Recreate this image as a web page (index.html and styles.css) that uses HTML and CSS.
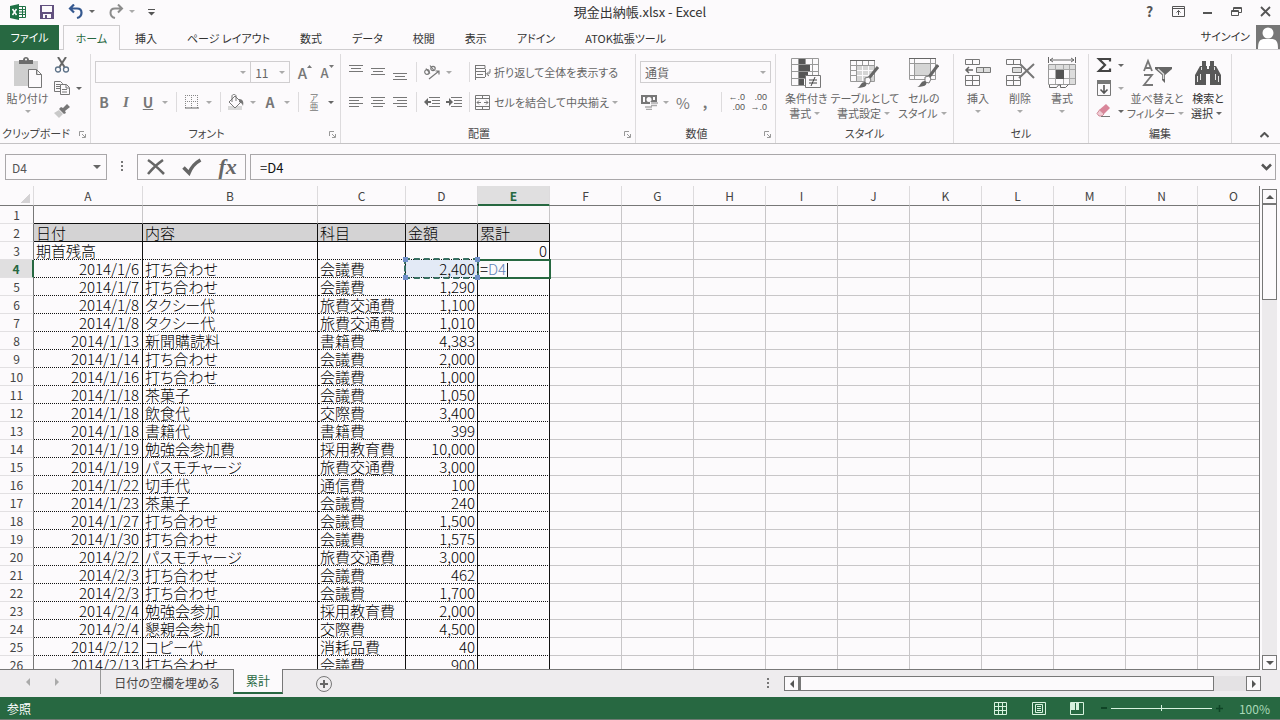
FILE: index.html
```html
<!DOCTYPE html>
<html lang="ja">
<head>
<meta charset="utf-8">
<title>現金出納帳.xlsx - Excel</title>
<link rel="stylesheet" href="styles.css">
</head>
<body>
<header class="titlebar">
  <div class="quick">
    <svg class="ic" width="18" height="18" viewBox="0 0 18 18"><path fill="#1f7145" d="M1 3l9-2v16l-9-2z"/><path fill="none" stroke="#1f7145" d="M10 3.500h6.500v11H10M10 6.500h6M10 9h6M10 11.500h6M13.500 4v10"/><path stroke="#fff" stroke-width="1.500" d="M3.500 6l4 6M7.500 6l-4 6"/></svg>
    <button class="qb" aria-label="上書き保存"><svg width="16" height="16" viewBox="0 0 16 16"><path fill="#62517f" d="M1 1h14v14H1zM3 2v6h10V2zM4 10v4h2v-3h2v3h4v-4z" fill-rule="evenodd"/></svg></button>
    <button class="qb" aria-label="元に戻す"><svg width="16" height="16" viewBox="0 0 16 16"><path fill="none" stroke="#35588f" stroke-width="2.200" d="M6 .5L2 4.500l4 4M2.500 4.500H9c6 0 6 8 0 9.500"/></svg></button>
    <span class="dd dark"></span>
    <button class="qb redo" aria-label="やり直し"><svg width="16" height="16" viewBox="0 0 16 16"><path fill="none" stroke="#8c8c8c" stroke-width="2" d="M10 .5l4 4-4 4M13.500 4.500H7c-6 0-6 8 0 9.500"/></svg></button>
    <span class="dd"></span>
    <button class="qb more" aria-label="カスタマイズ"><svg width="7" height="8" viewBox="0 0 7 8"><path fill="#555" d="M0 1h7v1H0zM0 4h7L3.500 7.500z"/></svg></button>
  </div>
  <div class="doc">現金出納帳.xlsx - Excel</div>
  <div class="win">
    <button aria-label="ヘルプ" class="help">?</button>
    <button aria-label="リボンの表示"><svg width="13" height="11" viewBox="0 0 13 11"><path fill="none" stroke="#555" d="M.5.5h12v10H.5zM.5 2.500h12M6.500 9V4.500M4.500 6.500l2-2 2 2"/></svg></button>
    <button aria-label="最小化"><svg width="11" height="11" viewBox="0 0 11 11"><path stroke="#555" stroke-width="2" d="M1 7h9"/></svg></button>
    <button aria-label="元のサイズ"><svg width="11" height="11" viewBox="0 0 11 11"><path fill="none" stroke="#555" d="M.5 4.500h7v5h-7zM.5 5.500h7M2.500 4V1.500h8v5H8M2.500 2.500h8"/></svg></button>
    <button aria-label="閉じる"><svg width="11" height="11" viewBox="0 0 11 11"><path stroke="#555" stroke-width="1.800" d="M1 1l9 9M10 1l-9 9"/></svg></button>
  </div>
</header>

<nav class="tabs">
  <button class="file">ファイル</button>
  <button class="tab on">ホーム</button>
  <button class="tab">挿入</button>
  <button class="tab">ページ レイアウト</button>
  <button class="tab">数式</button>
  <button class="tab">データ</button>
  <button class="tab">校閲</button>
  <button class="tab">表示</button>
  <button class="tab">アドイン</button>
  <button class="tab">ATOK拡張ツール</button>
  <a class="signin" href="#">サインイン</a>
  <svg class="avatar" width="24" height="24" viewBox="0 0 24 24"><path fill="#777" d="M0 0h24v24H0z"/><circle cx="12" cy="8" r="5.500" fill="#fff"/><path fill="#fff" d="M2 24c0-8 2-10 7-10h6c5 0 7 2 7 10z"/></svg>
</nav>

<section class="ribbon">
  <div class="group g-clip">
    <div class="body">
      <button class="big dim"><svg width="30" height="32" viewBox="0 0 30 32"><path fill="#cfcfcf" d="M1 4h24v25H1z"/><path fill="#6c6c6c" d="M6 3h4c0-4 6-4 6 0h4v4H6z"/><circle cx="13" cy="2.500" r="1" fill="#fff"/><path fill="#fcfafc" stroke="#777" d="M15.500 12.500h8l5 5v13h-13zM23.500 12.500v5h5"/></svg><span>貼り付け</span><i class="dd"></i></button>
      <div class="stack">
        <div class="row"><button class="t" aria-label="切り取り"><svg width="16" height="16" viewBox="0 0 16 16"><path stroke="#666" stroke-width="2" d="M4 0l6.500 10M12 0L5.500 10"/><circle cx="4" cy="12.500" r="2.500" fill="none" stroke="#5d7288" stroke-width="1.300"/><circle cx="12" cy="12.500" r="2.500" fill="none" stroke="#5d7288" stroke-width="1.300"/></svg></button></div>
        <div class="row"><button class="t" aria-label="コピー"><svg width="16" height="14" viewBox="0 0 16 14"><path fill="#fcfafc" stroke="#777" d="M.5.5h6l2 2v8h-8zM2 3.500h4M2 5.500h4M2 7.500h4"/><path fill="#fcfafc" stroke="#777" d="M6.500 3.500h6l3 3v7h-9zM12 3.500v3.500h3M8 8.500h5M8 11h5"/></svg></button><i class="dd dark"></i></div>
        <div class="row"><button class="t" aria-label="書式のコピー"><svg width="16" height="14" viewBox="0 0 16 14"><path fill="#777" d="M13 0l3 3-5 4 1 2-2 1-5-5 2-2 2 1z"/><path fill="#c9c9c9" d="M5 6l4 4-4 4-5-5z"/></svg></button></div>
      </div>
    </div>
    <div class="cap launched">クリップボード<svg class="launch" viewBox="0 0 7 7"><path d="M.5 5V.5H5M3 3l3 3M6.500 3v3.500H3"/></svg></div>
  </div>

  <div class="group g-font">
    <div class="body lines">
      <div class="row boxes">
        <select class="sel name" aria-label="フォント"><option></option></select>
        <select class="sel size" aria-label="フォント サイズ"><option>11</option></select>
        <button class="t letter" aria-label="拡大">A<svg width="5" height="3" viewBox="0 0 5 3"><path fill="#777" d="M0 3h5L2.500 0z"/></svg></button><button class="t letter small" aria-label="縮小">A<svg width="5" height="3" viewBox="0 0 5 3"><path fill="#777" d="M0 0h5L2.500 3z"/></svg></button>
      </div>
      <div class="row">
        <button class="t b">B</button><button class="t i">I</button><button class="t u">U</button><i class="dd"></i><i class="sep"></i>
        <button class="t" aria-label="罫線"><svg width="14" height="14" viewBox="0 0 14 14"><path fill="none" stroke="#888" stroke-dasharray="1 1" d="M0 .5h13M0 6.500h13M.5 0v13M6.500 0v13M12.500 0v13"/><path stroke="#666" d="M0 13h14"/></svg></button><i class="dd"></i><i class="sep"></i>
        <button class="t" aria-label="塗りつぶし"><svg width="18" height="16" viewBox="0 0 18 16"><path fill="#d8d8d8" d="M1 12h14v4H1z"/><path fill="#fcfafc" stroke="#777" d="M8 2l6 6-6 6-6-6zM5 8V2c0-2 4-2 4 0v5"/><path fill="#777" d="M12 5c4 0 5 3 4 7-1-3-2-3-4-4z"/></svg></button><i class="dd"></i>
        <button class="t b">A</button><i class="dd"></i><i class="sep"></i>
        <button class="t ruby" aria-label="ふりがな"><span>ア</span><span>亜</span></button><i class="dd dark"></i>
      </div>
    </div>
    <div class="cap launched">フォント<svg class="launch" viewBox="0 0 7 7"><path d="M.5 5V.5H5M3 3l3 3M6.500 3v3.500H3"/></svg></div>
  </div>

  <div class="group g-align">
    <div class="body split">
      <div class="lines">
        <div class="row">
          <button class="t" aria-label="上揃え"><svg class="al" viewBox="0 0 14 18"><path d="M0 2.500h14M2 5.500h10M0 8.500h14"/></svg></button>
          <button class="t" aria-label="上下中央"><svg class="al" viewBox="0 0 14 18"><path d="M0 5.500h14M2 8.500h10M0 11.500h14"/></svg></button>
          <button class="t" aria-label="下揃え"><svg class="al" viewBox="0 0 14 18"><path d="M0 10.500h14M2 13.500h10M0 16.500h14"/></svg></button><i class="sep"></i>
          <button class="t" aria-label="方向"><svg width="18" height="16" viewBox="0 0 18 16"><g fill="none" stroke="#777" stroke-width="1.200"><circle cx="4" cy="8" r="2.300"/><path d="M3 4.500l4 5M7 1.500l4 5"/><circle cx="10" cy="4.500" r="2.200"/><path d="M6 15L16 7M12.500 7H16v3.500"/></g></svg></button><i class="dd"></i>
        </div>
        <div class="row">
          <button class="t" aria-label="左揃え"><svg class="al" viewBox="0 0 14 18"><path d="M0 4.500h14M0 7.500h10M0 10.500h14M0 13.500h10"/></svg></button>
          <button class="t" aria-label="中央揃え"><svg class="al" viewBox="0 0 14 18"><path d="M0 4.500h14M2 7.500h10M0 10.500h14M2 13.500h10"/></svg></button>
          <button class="t" aria-label="右揃え"><svg class="al" viewBox="0 0 14 18"><path d="M0 4.500h14M4 7.500h10M0 10.500h14M4 13.500h10"/></svg></button><i class="sep"></i>
          <button class="t" aria-label="インデントを減らす"><svg width="16" height="12" viewBox="0 0 16 12"><path stroke="#777" d="M5 1.500h11M8 4.500h8M8 7.500h8M5 10.500h11"/><path stroke="#666" stroke-width="2" d="M1 6h6"/><path fill="#666" d="M0 6l4-4v8z"/></svg></button>
          <button class="t" aria-label="インデントを増やす"><svg width="16" height="12" viewBox="0 0 16 12"><path stroke="#777" d="M5 1.500h11M8 4.500h8M8 7.500h8M5 10.500h11"/><path stroke="#666" stroke-width="2" d="M0 6h6"/><path fill="#666" d="M7 6L3 2v8z"/></svg></button>
        </div>
      </div>
      <div class="lines">
        <div class="row"><i class="sep"></i><button class="wide"><svg width="16" height="15" viewBox="0 0 16 15"><path fill="none" stroke="#777" d="M.5 0v15M0 .5h10v3H0M0 6.500h10M2 9.500h6M0 12.500h10M10.500 4v8M15 4v3c0 2-2 2-3 2M14 6.500L11.500 9l2.500 2"/></svg>折り返して全体を表示する</button></div>
        <div class="row"><i class="sep"></i><button class="wide"><svg width="16" height="15" viewBox="0 0 16 15"><path fill="none" stroke="#777" d="M.5.5h14v14H.5zM.5 3.500h14M.5 11.500h14M7.500 0v3M7.500 12v3M2 7.500h4M9 7.500h4M4 5.500l-2 2 2 2M11 5.500l2 2-2 2"/></svg>セルを結合して中央揃え</button><i class="dd"></i></div>
      </div>
    </div>
    <div class="cap launched">配置<svg class="launch" viewBox="0 0 7 7"><path d="M.5 5V.5H5M3 3l3 3M6.500 3v3.500H3"/></svg></div>
  </div>

  <div class="group g-num">
    <div class="body lines">
      <div class="row boxes"><select class="sel fmt" aria-label="表示形式"><option>通貨</option></select></div>
      <div class="row">
        <button class="t" aria-label="通貨表示形式"><svg width="18" height="16" viewBox="0 0 18 16"><path fill="#777" d="M1 1h16v9H1zM3 3v5h2V3zM13 3v3h2V3z" fill-rule="evenodd"/><circle cx="9" cy="5.500" r="2.500" fill="#fcfafc"/><path stroke="#fcfafc" stroke-width="5" d="M10 10.500h8"/><path stroke="#aaa" stroke-width="1.300" d="M11 9h7M11 11.500h6M5 13h7M6 15.500h6"/></svg></button><i class="dd"></i>
        <button class="t pct">%</button><button class="t b">,</button><i class="sep"></i>
        <button class="t dec" aria-label="小数点以下の表示桁数を増やす"><span>←.0</span><span>.00</span></button>
        <button class="t dec" aria-label="小数点以下の表示桁数を減らす"><span>.00</span><span>→.0</span></button>
      </div>
    </div>
    <div class="cap launched">数値<svg class="launch" viewBox="0 0 7 7"><path d="M.5 5V.5H5M3 3l3 3M6.500 3v3.500H3"/></svg></div>
  </div>

  <div class="group g-style">
    <div class="body">
      <button class="big dim"><svg width="30" height="32" viewBox="0 0 30 32"><path fill="#fcfafc" stroke="#999" d="M.5 1.500h27v27H.5zM.5 7.500h27M.5 14.500h27M.5 21.500h27M7.500 1.500v27M14.500 1.500v27M21.500 1.500v27"/><path fill="#555" d="M8 2h6v5H8zM8 8h11v6H8zM8 15h9v6H8zM8 22h5v6H8z"/><path fill="#fcfafc" stroke="#777" d="M14.500 18.500h15v12h-15z"/><path stroke="#444" d="M18 23h8M18 26h8M24 20l-4 9"/></svg><span>条件付き</span><span>書式<i class="dd"></i></span></button>
      <button class="big dim"><svg width="30" height="32" viewBox="0 0 30 32"><path fill="#fcfafc" stroke="#999" d="M.5 3.500h24v21H.5zM.5 8.500h24M.5 13.500h24M.5 18.500h24M6.500 3v22M12.500 3v22M18.500 3v22"/><path fill="#d5d5d5" d="M7 9h17v15H7z"/><path stroke="#fcfafc" d="M12.500 9v15M18.500 9v15M7 13.500h17M7 18.500h17"/><path stroke="#666" d="M0 3.500h25"/><path stroke="#666" stroke-width="3" d="M28 10l-9 11"/><path fill="#fcfafc" stroke="#777" d="M15 21l4-1 2 3-2 4-4-1z"/><path fill="#666" d="M7 31c4-1 3-6 8-6 3 2 2 6-8 6z"/></svg><span>テーブルとして</span><span>書式設定<i class="dd"></i></span></button>
      <button class="big dim"><svg width="30" height="32" viewBox="0 0 30 32"><path fill="#fcfafc" stroke="#999" d="M.5 1.500h26v21H.5zM.5 6.500h26M.5 18.500h26M5.500 1v22M21.500 1v22"/><path fill="#d5d5d5" d="M6 7h15v11H6z"/><path stroke="#666" d="M0 1.500h27"/><path stroke="#666" stroke-width="3" d="M29 8l-9 12"/><path fill="#fcfafc" stroke="#777" d="M16 20l4-1 2 3-2 4-4-1z"/><path fill="#666" d="M8 30c4-1 3-6 8-6 3 2 2 6-8 6z"/></svg><span>セルの</span><span>スタイル<i class="dd"></i></span></button>
    </div>
    <div class="cap">スタイル</div>
  </div>

  <div class="group g-cell">
    <div class="body">
      <button class="big dim"><svg width="28" height="32" viewBox="0 0 28 32"><path fill="none" stroke="#777" d="M1.500 2.500h14v5h-14zM8.500 2v5M1.500 18.500h14v10h-14zM1.500 23.500h14M8.500 18v10"/><path fill="#ddd" stroke="#777" d="M12.500 10.500h14v5h-14zM19.500 10v5"/><path fill="none" stroke="#666" stroke-width="1.500" d="M9 13H2M5 10l-3 3 3 3"/></svg><span>挿入</span><i class="dd"></i></button>
      <button class="big dim"><svg width="30" height="32" viewBox="0 0 30 32"><path fill="none" stroke="#777" d="M1.500 2.500h14v5h-14zM8.500 2v5M1.500 18.500h14v10h-14zM1.500 23.500h14M8.500 18v10"/><path fill="#ddd" stroke="#777" d="M7.500 10.500h9v5h-9z"/><path stroke="#777" stroke-width="2" d="M15 7l14 14M29 7L14 21"/></svg><span>削除</span><i class="dd"></i></button>
      <button class="big dim"><svg width="28" height="32" viewBox="0 0 28 32"><path fill="#fcfafc" stroke="#999" d="M.5 7.500h27v20H.5z"/><path fill="#ddd" d="M1 8h26v5H1zM22 13h5v14h-5z"/><path fill="none" stroke="#aaa" d="M1 12.500h26M1 21.500h26M7.500 8v19M15.500 8v19M21.500 8v19"/><path fill="none" stroke="#666" d="M.5 0v6M27.500 0v6M2 3h24M5 1L2 3l3 2M23 1l3 2-3 2M1.500 28v2.500h7l2-2.500h2v2.500h5l3-3"/><path fill="#555" d="M8 13h8v9H8z"/></svg><span>書式</span><i class="dd"></i></button>
    </div>
    <div class="cap">セル</div>
  </div>

  <div class="group g-edit">
    <div class="body">
      <div class="stack">
        <div class="row"><button class="t" aria-label="合計"><svg width="16" height="16" viewBox="0 0 16 16"><path fill="none" stroke="#444" stroke-width="2.200" d="M14 4.500V2H3l6 6-6 6h11v-2.500"/></svg></button><i class="dd dark"></i></div>
        <div class="row"><button class="t" aria-label="フィル"><svg width="14" height="16" viewBox="0 0 14 16"><path fill="#fcfafc" stroke="#777" d="M.5.5h13v15H.5z"/><path fill="#777" d="M0 0h14v4H0z"/><path fill="none" stroke="#555" stroke-width="1.600" d="M7 5v8M3.500 9.500L7 13l3.500-3.500"/></svg></button><i class="dd"></i></div>
        <div class="row"><button class="t" aria-label="クリア"><svg width="16" height="14" viewBox="0 0 16 14"><path fill="#d9869a" d="M10 0l4 4-6 6-5-4z"/><path fill="#f2ccd5" stroke="#d08a98" d="M3.500 6l4.500 4-2 2H3L1 9.500z"/><path stroke="#777" d="M5 12.500h9"/></svg></button><i class="dd dark"></i></div>
      </div>
      <button class="big dim sort"><svg width="30" height="32" viewBox="0 0 30 32"><path fill="none" stroke="#777" stroke-width="1.800" d="M2 14L6 4l4 10M3 11h6M2 18h8L2 28h9"/><path fill="#666" d="M13 10h17v2l-7 6v8l-3-3v-5l-7-6z"/><path fill="none" stroke="#ddd" stroke-width="1.500" d="M16 12l5.500 5v5"/></svg><span>並べ替えと</span><span>フィルター<i class="dd"></i></span></button>
      <button class="big find"><svg width="28" height="32" viewBox="0 0 28 32"><path fill="#595959" d="M8 4h4v5h1v3h2V9h1V4h4v5h2l5 9v10H16V17h-4v11H1V18l5-9h2z"/><path fill="none" stroke="#e4e4e4" d="M7.500 10v3M20.500 10v3M3.500 19v6M6.500 17v6M21.500 17v6M24.500 19v6"/></svg><span>検索と</span><span>選択<i class="dd dark"></i></span></button>
    </div>
    <div class="cap">編集</div>
  </div>
  <button class="fold" aria-label="リボンを折りたたむ"><svg width="9" height="6" viewBox="0 0 9 6"><path fill="none" stroke="#555" stroke-width="2" d="M.5 5l4-4 4 4"/></svg></button>
</section>

<section class="fbar">
  <div class="namebox"><input aria-label="名前ボックス" value="D4"><i class="dd dark"></i></div>
  <i class="dots"></i>
  <div class="fbtns">
    <button aria-label="キャンセル"><svg width="20" height="18" viewBox="0 0 20 18"><path fill="none" stroke="#666" stroke-width="2.500" d="M2 2c6 4 11 9 16 14M17 2C11 6 6 11 2 16"/></svg></button>
    <button aria-label="入力"><svg width="20" height="18" viewBox="0 0 20 18"><path fill="none" stroke="#666" stroke-width="3.500" d="M1.500 9.500L7 15C9 10 13 5 18.500 2"/></svg></button>
    <button class="fx" aria-label="関数の挿入">fx</button>
  </div>
  <div class="formula"><input aria-label="数式バー" value="=D4"><svg width="11" height="8" viewBox="0 0 11 8"><path fill="none" stroke="#555" stroke-width="2.500" d="M1 1.500l4.500 4.500L10 1.500"/></svg></div>
</section>

<main class="main">
  <div class="sheet">
    <table>
      <colgroup><col class="c0"><col class="ca"><col class="cb"><col class="cc"><col class="cd" span="12"></colgroup>
      <thead><tr><th class="corner"></th><th>A</th><th>B</th><th>C</th><th>D</th><th class="on">E</th><th>F</th><th>G</th><th>H</th><th>I</th><th>J</th><th>K</th><th>L</th><th>M</th><th>N</th><th>O</th></tr></thead>
      <tbody>
        <tr class="first"><th>1</th><td></td><td></td><td></td><td></td><td></td><td class="blank" colspan="10"></td></tr>
        <tr class="heads"><th>2</th><td>日付</td><td>内容</td><td>科目</td><td>金額</td><td>累計</td><td class="blank" colspan="10"></td></tr>
        <tr><th>3</th><td class="l">期首残高</td><td></td><td></td><td></td><td>0</td><td class="blank" colspan="10"></td></tr>
        <tr><th class="on">4</th><td>2014/1/6</td><td>打ち合わせ</td><td>会議費</td><td class="ref">2,400<span class="marquee"><b></b><b></b><b></b><b></b></span></td><td class="edit">=<span class="refname">D4</span><span class="cursor"></span></td><td class="blank" colspan="10"></td></tr>
        <tr><th>5</th><td>2014/1/7</td><td>打ち合わせ</td><td>会議費</td><td>1,290</td><td></td><td class="blank" colspan="10"></td></tr>
        <tr><th>6</th><td>2014/1/8</td><td>タクシー代</td><td>旅費交通費</td><td>1,100</td><td></td><td class="blank" colspan="10"></td></tr>
        <tr><th>7</th><td>2014/1/8</td><td>タクシー代</td><td>旅費交通費</td><td>1,010</td><td></td><td class="blank" colspan="10"></td></tr>
        <tr><th>8</th><td>2014/1/13</td><td>新聞購読料</td><td>書籍費</td><td>4,383</td><td></td><td class="blank" colspan="10"></td></tr>
        <tr><th>9</th><td>2014/1/14</td><td>打ち合わせ</td><td>会議費</td><td>2,000</td><td></td><td class="blank" colspan="10"></td></tr>
        <tr><th>10</th><td>2014/1/16</td><td>打ち合わせ</td><td>会議費</td><td>1,000</td><td></td><td class="blank" colspan="10"></td></tr>
        <tr><th>11</th><td>2014/1/18</td><td>茶菓子</td><td>会議費</td><td>1,050</td><td></td><td class="blank" colspan="10"></td></tr>
        <tr><th>12</th><td>2014/1/18</td><td>飲食代</td><td>交際費</td><td>3,400</td><td></td><td class="blank" colspan="10"></td></tr>
        <tr><th>13</th><td>2014/1/18</td><td>書籍代</td><td>書籍費</td><td>399</td><td></td><td class="blank" colspan="10"></td></tr>
        <tr><th>14</th><td>2014/1/19</td><td>勉強会参加費</td><td>採用教育費</td><td>10,000</td><td></td><td class="blank" colspan="10"></td></tr>
        <tr><th>15</th><td>2014/1/19</td><td>パスモチャージ</td><td>旅費交通費</td><td>3,000</td><td></td><td class="blank" colspan="10"></td></tr>
        <tr><th>16</th><td>2014/1/22</td><td>切手代</td><td>通信費</td><td>100</td><td></td><td class="blank" colspan="10"></td></tr>
        <tr><th>17</th><td>2014/1/23</td><td>茶菓子</td><td>会議費</td><td>240</td><td></td><td class="blank" colspan="10"></td></tr>
        <tr><th>18</th><td>2014/1/27</td><td>打ち合わせ</td><td>会議費</td><td>1,500</td><td></td><td class="blank" colspan="10"></td></tr>
        <tr><th>19</th><td>2014/1/30</td><td>打ち合わせ</td><td>会議費</td><td>1,575</td><td></td><td class="blank" colspan="10"></td></tr>
        <tr><th>20</th><td>2014/2/2</td><td>パスモチャージ</td><td>旅費交通費</td><td>3,000</td><td></td><td class="blank" colspan="10"></td></tr>
        <tr><th>21</th><td>2014/2/3</td><td>打ち合わせ</td><td>会議費</td><td>462</td><td></td><td class="blank" colspan="10"></td></tr>
        <tr><th>22</th><td>2014/2/3</td><td>打ち合わせ</td><td>会議費</td><td>1,700</td><td></td><td class="blank" colspan="10"></td></tr>
        <tr><th>23</th><td>2014/2/4</td><td>勉強会参加</td><td>採用教育費</td><td>2,000</td><td></td><td class="blank" colspan="10"></td></tr>
        <tr><th>24</th><td>2014/2/4</td><td>懇親会参加</td><td>交際費</td><td>4,500</td><td></td><td class="blank" colspan="10"></td></tr>
        <tr><th>25</th><td>2014/2/12</td><td>コピー代</td><td>消耗品費</td><td>40</td><td></td><td class="blank" colspan="10"></td></tr>
        <tr><th>26</th><td>2014/2/13</td><td>打ち合わせ</td><td>会議費</td><td>900</td><td></td><td class="blank" colspan="10"></td></tr>
      </tbody>
    </table>
  </div>
  <div class="vscroll"><button aria-label="上へ"><i class="tri up"></i></button><i class="thumb"></i><i class="track"></i><button aria-label="下へ"><i class="tri down"></i></button></div>
</main>

<section class="strip">
  <div class="navs"><i class="tri left pale"></i><i class="tri right pale"></i></div>
  <button class="stab">日付の空欄を埋める</button>
  <button class="stab on">累計</button>
  <div class="rest">
    <button class="add" aria-label="新しいシート"><svg width="18" height="18" viewBox="0 0 18 18"><circle cx="9" cy="9" r="7.500" fill="none" stroke="#777"/><path stroke="#666" stroke-width="2" d="M5 9h8M9 5v8"/></svg></button>
    <i class="dots"></i>
    <div class="hscroll"><button aria-label="左へ"><i class="tri left"></i></button><i class="thumb"></i><i class="track"></i><button aria-label="右へ"><i class="tri right"></i></button></div>
  </div>
</section>

<footer class="status">
  <span class="mode">参照</span>
  <button aria-label="標準"><svg width="14" height="13" viewBox="0 0 14 13"><path fill="none" stroke="#d8f2df" d="M.5.5h12v12H.5zM.5 4.500h12M.5 8.500h12M4.500 0v13M8.500 0v13"/></svg></button>
  <button aria-label="ページ レイアウト"><svg width="14" height="13" viewBox="0 0 14 13"><path fill="none" stroke="#d8f2df" d="M.5.5h13v12H.5zM3.500 2.500h7v8h-7zM5 4.500h4M5 6.500h4M5 8.500h4"/></svg></button>
  <button aria-label="改ページ プレビュー"><svg width="14" height="13" viewBox="0 0 14 13"><path fill="none" stroke="#d8f2df" d="M.5.5h13v12H.5z"/><path fill="#d8f2df" d="M1 1h4v7H1zM6 1h3v7H6z"/></svg></button>
  <div class="zoom"><span class="minus"></span><span class="rail"></span><svg width="7" height="7" viewBox="0 0 7 7"><path stroke="#0f4426" stroke-width="1.500" d="M0 3.500h7M3.500 0v7"/></svg></div>
  <span class="pc">100%</span>
</footer>
</body>
</html>
```
FILE: styles.css
```css
* { box-sizing: border-box; }
html, body { height: 100%; }
body {
  margin: 0;
  display: flex;
  flex-direction: column;
  overflow: hidden;
  background: #fcfafc;
  color: #333;
  font: 12px/15px "Noto Sans CJK JP", "Noto Sans", sans-serif;
  font-feature-settings: "palt";
}
button, input, select { font: inherit; font-feature-settings: inherit; color: inherit; background: none; border: 0; padding: 0; margin: 0; border-radius: 0; }
button { display: flex; align-items: center; justify-content: center; white-space: nowrap; }
svg { display: block; flex: none; }

.dd { flex: none; width: 12px; display: inline-flex; justify-content: center; }
.dd::before { content: ""; border: 3px solid transparent; border-top-color: #aaa; border-bottom: 0; }
.dd.dark::before { border-top-color: #666; }
.tri { border: 4px solid transparent; }
.tri.up { border-top: 0; border-bottom-color: #555; }
.tri.down { border-bottom: 0; border-top-color: #555; }
.tri.left { border-left: 0; border-right-color: #555; }
.tri.right { border-right: 0; border-left-color: #555; }
.tri.left.pale { border-right-color: #aaa; }
.tri.right.pale { border-left-color: #aaa; }

.titlebar { height: 25px; flex: none; display: grid; grid-template-columns: 1fr auto 1fr; align-items: center; padding-bottom: 2px; }
.quick { display: flex; align-items: center; padding-left: 9px; }
.qb { width: 16px; margin-left: 12px; }
.qb + .qb { margin-left: 13px; }
.qb.redo { margin-left: 10px; }
.qb.more { margin-left: 5px; }
.quick .dd { margin-left: 2px; }
.doc { font-size: 13px; }
.win { display: flex; justify-content: flex-end; }
.win button { width: 29px; height: 22px; }
.win .help { font-weight: 700; font-size: 14px; color: #555; }

.tabs { height: 25px; flex: none; display: flex; border-bottom: 1px solid #cfcdcf; font-size: 11px; }
.file { width: 59px; height: 25px; background: #276841; color: #fff; margin-right: 4px; }
.tab { padding: 0 14px; height: 25px; border: 1px solid transparent; border-bottom: 0; }
.tab.on { width: 57px; padding: 0; background: #fcfafc; border-color: #cfcdcf; color: #276841; }
.signin { margin: 4px 6px 0 auto; color: #333; text-decoration: none; }

.ribbon { height: 94px; flex: none; display: flex; border-bottom: 1px solid #c4c2c4; color: #444; font-size: 11px; }
.group { flex: none; display: flex; flex-direction: column; border-right: 1px solid #dddbdd; margin-top: 4px; }
.g-clip { width: 91px; }
.g-font { width: 250px; }
.g-align { width: 295px; }
.g-num { width: 140px; }
.g-style { width: 178px; }
.g-cell { width: 135px; }
.g-edit { width: 143px; }
.body { flex: 1; display: flex; min-height: 0; }
.cap { height: 17px; line-height: 15px; text-align: center; position: relative; white-space: nowrap; }
.cap.launched { padding-right: 18px; }
.launch { position: absolute; right: 4px; top: 5px; width: 7px; height: 7px; fill: none; stroke: #999; }
.row { display: flex; align-items: center; height: 22px; }
.lines { display: flex; flex-direction: column; gap: 8px; padding: 7px 2px 0; }
.t { flex: none; width: 22px; height: 22px; color: #777; }
.sep { flex: none; width: 10px; height: 20px; display: flex; justify-content: center; }
.sep::before { content: ""; width: 1px; background: #dddbdd; }
.stack { display: flex; flex-direction: column; gap: 1px; }
.big { flex-direction: column; justify-content: flex-start; padding-top: 3px; color: #333; }
.big.dim { color: #666; }
.big span { display: flex; align-items: center; }
.big svg { margin-bottom: 2px; }
.big > .dd { margin-top: 4px; }
.g-clip .big { width: 47px; margin-left: 4px; }
.g-style .big { width: 59px; }
.g-style .body { padding-left: 1px; }
.g-cell .body { padding-left: 3px; }
.g-cell .big { width: 42px; }
.g-edit .stack { padding-left: 4px; }
.sort { width: 52px; margin-left: 4px; }
.find { width: 44px; margin-left: 3px; }
.sel {
  height: 22px;
  border: 1px solid #d0ced0;
  padding-left: 4px;
  color: #666;
  appearance: none;
  background: url("data:image/svg+xml,%3Csvg xmlns='http://www.w3.org/2000/svg' width='6' height='3'%3E%3Cpath fill='%23aaa' d='M0 0h6L3 3z'/%3E%3C/svg%3E") no-repeat right 4px center;
  font-size: 12px;
}
.boxes { padding-left: 2px; }
.name { width: 157px; }
.size { width: 40px; margin-left: -1px; margin-right: 4px; }
.fmt { width: 131px; }
.letter { font-size: 15px; font-weight: 500; }
.letter.small { font-size: 13px; }
.letter svg { align-self: flex-start; margin-top: 4px; }
.b { font-weight: 700; font-size: 14px; }
.i { font: italic 700 15px "Liberation Serif", serif; }
.u { font-weight: 700; font-size: 14px; text-decoration: underline; }
.ruby { flex-direction: column; font-size: 9px; line-height: 9px; }
.pct { font-size: 15px; }
.dec { flex-direction: column; align-items: flex-end; padding-right: 3px; font: 9px/10px "Liberation Sans", sans-serif; color: #555; }
.al { width: 14px; height: 18px; fill: none; stroke: #777; }
.split .lines { padding-right: 0; }
.split .lines + .lines { padding-left: 0; }
.split { padding-left: 2px; }
.wide { gap: 3px; color: #666; padding-left: 1px; }
.g-align .lines:first-child { width: 121px; }
.fold { margin: 80px 10px 0 auto; width: 11px; height: 10px; }

.fbar { height: 42px; flex: none; display: flex; padding: 10px 4px 6px 5px; }
.fbar > div { border: 1px solid #a9a7a9; display: flex; align-items: center; height: 26px; }
.namebox { width: 102px; padding-left: 6px; padding-right: 3px; color: #555; }
.namebox input { flex: 1; min-width: 0; }
.namebox .dd::before { border-width: 4px 4px 0; }
.dots { width: 2px; height: 11px; background: repeating-linear-gradient(#777 0 2px, transparent 2px 4px); margin: 7px 14px; }
.fbtns { width: 109px; justify-content: space-around; }
.fx { font: italic 700 22px/22px "Liberation Serif", serif; color: #666; }
.formula { flex: 1; margin-left: 4px; padding: 0 3px 0 9px; color: #111; font-size: 13px; }
.formula input { flex: 1; min-width: 0; }

.main { flex: 1; min-height: 0; display: flex; }
.sheet { flex: 1; min-width: 0; overflow: hidden; border-bottom: 1px solid #777; border-right: 1px solid #777; }
table { border-collapse: separate; border-spacing: 0; table-layout: fixed; width: 1270px; color: #000; }
.c0 { width: 34px; }
.ca { width: 109px; }
.cb { width: 175px; }
.cc { width: 88px; }
.cd { width: 72px; }
th, td { padding: 0; height: 18px; line-height: 17px; white-space: nowrap; }
th { font-weight: 400; color: #444; }
thead th { height: 20px; border-right: 1px solid #dddbdd; border-bottom: 1px solid #777; }
thead th.on { background: #e0dfe0; color: #276841; font-weight: 700; border-bottom: 2px solid #276841; }
.corner { background: linear-gradient(135deg, transparent 50%, #d4d2d4 50%) 21px 8px / 9px 9px no-repeat; }
tbody th { border-right: 1px solid #777; border-bottom: 1px solid #e2e0e2; }
tbody th.on { background: #e0dfe0; color: #276841; font-weight: 700; border-right: 2px solid #276841; }
td { font-size: 15px; font-weight: 300; border-right: 1px solid #111; border-bottom: 1px dotted #111; padding: 0 2px; text-align: right; }
td:nth-child(2) { font-feature-settings: normal; padding-right: 3px; }
td:nth-child(3), td:nth-child(4), td.l { text-align: left; }
.first td { border-right-color: #c8c6c8; border-bottom: 1px solid #111; }
.heads td { background: #d4d3d4; border-bottom: 1px solid #111; text-align: left; }
tr td.blank { background: repeating-linear-gradient(to right, transparent 0 71px, #c8c6c8 71px 72px); border-right: 0; border-bottom: 1px solid #c8c6c8; }
.ref { position: relative; background: #e3eaf6; }
.marquee { position: absolute; inset: -2px; border: 2px dashed #376f62; }
.marquee b { position: absolute; width: 5px; height: 5px; background: #6f8fc9; }
.marquee b:nth-child(1) { left: -3px; top: -3px; }
.marquee b:nth-child(2) { right: -3px; top: -3px; }
.marquee b:nth-child(3) { left: -3px; bottom: -3px; }
.marquee b:nth-child(4) { right: -3px; bottom: -3px; }
td.edit { text-align: left; outline: 2px solid #276841; outline-offset: -1px; border-color: transparent; }
.refname { color: #5f83b8; }
.cursor { display: inline-block; width: 1px; height: 14px; margin-left: 1px; background: #111; vertical-align: -2px; }

.vscroll { width: 20px; padding: 3px 3px 0 2px; display: flex; flex-direction: column; }
.vscroll button, .hscroll button { flex: none; width: 15px; height: 15px; border: 1px solid #777; background: #fcfafc; }
.vscroll .thumb { flex: none; height: 96px; border: 1px solid #777; }
.track { flex: 1; background: #eceaec; }

.strip { height: 27px; flex: none; display: flex; background: #eeecee; }
.navs { width: 101px; display: flex; align-items: center; gap: 25px; padding-left: 26px; border-right: 1px solid #999; height: 24px; }
.stab { height: 24px; padding: 0 13px; color: #444; width: 132px; }
.stab.on { position: relative; width: 50px; margin-top: -1px; height: 25px; background: #fcfafc; color: #276841; border: 1px solid #777; border-top: 0; border-bottom: 2px solid #276841; }
.rest { flex: 1; display: flex; align-items: center; padding-right: 19px; }
.add { margin-left: 32px; }
.rest .dots { margin: 0 15px 0 auto; }
.hscroll { width: 477px; display: flex; }
.hscroll .thumb { flex: 415 1 0; border: 1px solid #777; border-left-width: 2px; background: #fcfafc; }
.hscroll .track { flex: 32 1 0; background: #e4e2e4; }

.status { height: 23px; flex: none; display: flex; align-items: center; background: #276841; border-bottom: 1px solid #6f7a73; color: #fff; padding: 0 10px 0 7px; }
.mode { margin-right: auto; }
.status button { margin-right: 24px; }
.zoom { display: flex; align-items: center; gap: 4px; width: 122px; margin: 0 16px 0 -7px; }
.minus { width: 6px; height: 2px; background: #0f4426; }
.rail { flex: 1; height: 6px; background: linear-gradient(#d8f2df, #d8f2df) center / 1px 6px no-repeat, linear-gradient(#d8f2df, #d8f2df) center / 100% 1px no-repeat; }
.pc { color: #a9d8b8; }
```
